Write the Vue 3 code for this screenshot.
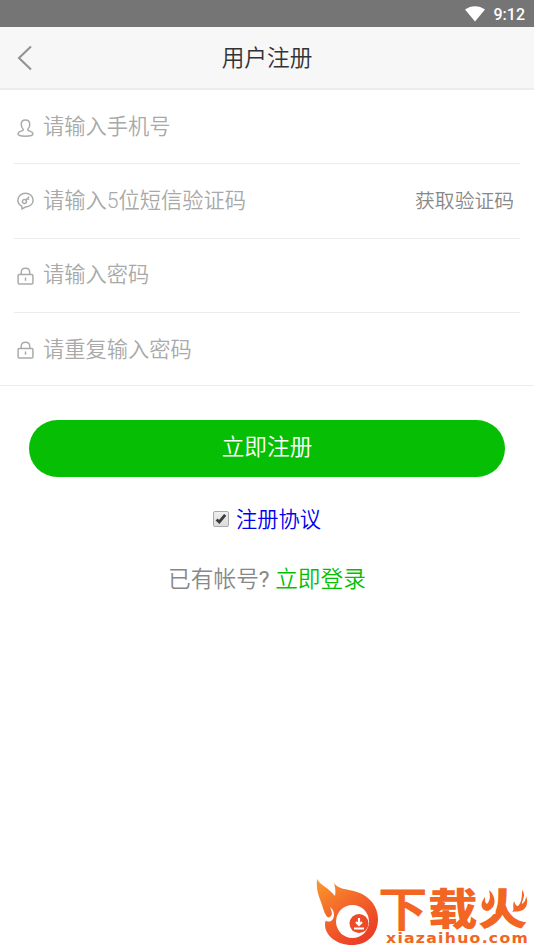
<script setup>
import { ref } from 'vue'

const agreed = ref(true)
const fields = [
  { id: 'phone', icon: 'user', type: 'tel', hint: '请输入手机号' },
  { id: 'code', icon: 'key', type: 'text', hint: '请输入5位短信验证码', action: '获取验证码' },
  { id: 'password', icon: 'lock', type: 'text', hint: '请输入密码' },
  { id: 'repeat', icon: 'lock', type: 'text', hint: '请重复输入密码' },
]
</script>

<template>
  <div class="page">
    <div class="status">
      <svg class="wifi" viewBox="0 0 20 16"><path d="M0 3.6C6-.9 14-.9 20 3.6L10 15.6Z" fill="#fff" /></svg>
      <span class="clock">9:12</span>
    </div>
    <header class="header">
      <svg class="back" viewBox="0 0 16 26"><path d="M14 1.500 2 13l12 11.500" fill="none" stroke="#939393" stroke-width="2.100" /></svg>
      <h1 class="title">用户注册</h1>
    </header>

    <form class="form" @submit.prevent>
      <div v-for="f in fields" :key="f.id" class="row" :class="f.id">
        <svg v-if="f.icon === 'user'" class="icon" viewBox="0 0 16 17">
          <path d="M5.8 9.7C4.4 8.5 4 6.8 4 5 4 2.4 5.5 1 8 1s4 1.4 4 4c0 1.800-.4 3.500-1.800 4.700-.4.8.3 1.200 1.300 1.500 2 .6 3.500 1.300 3.500 3 0 1.500-2 2-7 2s-7-.5-7-2c0-1.700 1.500-2.400 3.500-3 1-.3 1.700-.7 1.300-1.500Z" />
        </svg>
        <svg v-else-if="f.icon === 'key'" class="icon" viewBox="0 0 16 17">
          <path d="M4.400 13.300C2 12 .8 10 .8 7.700.8 4 4 1.200 8 1.200s7.200 2.800 7.200 6.500S12 14.200 8 14.200L4.700 16Z" />
          <circle cx="7" cy="9" r="1.900" />
          <path d="m8.400 7.600 3-3.100M9.900 6.100l1.300 1.200" />
        </svg>
        <svg v-else class="icon" viewBox="0 0 16 17">
          <rect x="1" y="7" width="14" height="9" rx="1" />
          <path d="M4 7V5c0-5.100 8-5.100 8 0v2M8 10v3" />
        </svg>
        <input class="field" :type="f.type" :placeholder="f.hint" />
        <button v-if="f.action" class="send" type="button">{{ f.action }}</button>
      </div>
    </form>

    <button class="submit" type="button">立即注册</button>

    <div class="agree">
      <button class="check" type="button" role="checkbox" :aria-checked="agreed" @click="agreed = !agreed">
        <svg v-if="agreed" viewBox="0 0 14 14"><path d="M2.600 7.500 5.300 10 11.200 2.900" fill="none" stroke="#3b3b3b" stroke-width="2.900" /></svg>
      </button>
      <a class="terms">注册协议</a>
    </div>
    <p class="login">已有帐号<span class="mark">?</span> <a class="go">立即登录</a></p>

    <div class="brand">
      <svg class="flame" viewBox="0 0 62 68">
        <defs>
          <linearGradient id="fire" x1="0" y1="0" x2=".65" y2="1">
            <stop offset="0" stop-color="#fa9a2b" />
            <stop offset=".5" stop-color="#f3672a" />
            <stop offset="1" stop-color="#eb3e27" />
          </linearGradient>
        </defs>
        <path fill="url(#fire)" d="M1 0C4 6 12 8 19 17C20 12 19 8 18 4C23 11 29 9 41 13C54 17 62 28 62 40C62 56 51 66 36 66C20 66 9 56 9 46C9 42 10 40 14 40C9 37 8 32 6 26C3 17 0 12 1 0Z" />
        <path fill="#fff" d="M4 32C7 39 12 40 15 37C17 34 15 31 14 28C18 31 19 36 17 40C14 45 7 43 4 32Z" />
        <circle cx="36.500" cy="42.500" r="16.500" fill="#fff" />
        <circle cx="43" cy="44.500" r="9.500" fill="#ed4a27" />
        <path d="M43 39v6M40 43l3 3 3-3M38 49.500h10" fill="none" stroke="#fff" stroke-width="2.200" />
      </svg>
      <div class="names">
        <div class="cn">
          <span class="thin">下</span><span>载</span><span>火</span>
          <svg class="sparks" viewBox="0 0 50 26">
            <path fill="#fff" d="M0 0H15.500V24H0ZM32 0H50V24H31L29 20Z" />
            <path fill="#f26522" d="M9 0C16 6 16 15 11 19C8 22 5 21 3 19C0 15 2 11 5 7C5 11 5 13 7 14C11 10 10 5 9 0ZM42 0C47 6 41 11 42 14C45 12 46 9 46 6C49 13 46 20 40 21C37 22 35 21 32 22C35 19 32 17 34 11C35 14 36 16 38 16C42 12 42 6 42 0Z" />
          </svg>
        </div>
        <div class="en">xiazaihuo.com</div>
      </div>
    </div>
  </div>
</template>

<style>
body { margin: 0; background: #fff; }
</style>

<style scoped>
.page {
  display: flex;
  flex-direction: column;
  box-sizing: border-box;
  width: 534px;
  height: 949px;
  overflow: hidden;
  background: #fff;
  font-family: Roboto, "Noto Sans CJK SC", sans-serif;
  font-weight: 350;
}
button { padding: 0; border: 0; background: none; font: inherit; }
.status {
  display: flex;
  align-items: center;
  justify-content: flex-end;
  gap: 8px;
  box-sizing: border-box;
  height: 27px;
  padding-right: 9px;
  background: #757575;
}
.wifi { width: 20px; height: 16px; margin-right: 1px; }
.clock { padding-top: 2px; color: #fff; font-size: 16px; font-weight: 500; line-height: 20px; }
.header {
  display: grid;
  grid-template-columns: 34px 1fr 34px;
  align-items: center;
  box-sizing: border-box;
  height: 63px;
  border-bottom: 2px solid #ececec;
  background: #f7f7f7;
}
.back { width: 16px; height: 26px; margin-left: 17px; }
.title { margin: 0; padding-top: 2px; color: #333; font-size: 22.700px; font-weight: 350; line-height: 30px; text-align: center; }
.form { border-bottom: 1px solid #ececec; }
.row {
  display: flex;
  align-items: center;
  box-sizing: border-box;
  height: 74px;
  margin: 0 14px;
  padding: 0 6px 0 3px;
  border-bottom: 1px solid #ececec;
}
.row.code { height: 75px; padding-bottom: 2px; }
.row.password { padding-bottom: 2px; }
.row.repeat { height: 72px; border: 0; }
.icon { flex: none; width: 17px; height: 18px; margin-top: 2px; fill: none; stroke: #aaa; stroke-width: 1.400; }
.field {
  flex: 1;
  min-width: 0;
  height: 40px;
  margin-left: 9px;
  padding: 0;
  border: 0;
  outline: 0;
  background: none;
  color: #333;
  font: inherit;
  font-size: 21.250px;
}
.field::placeholder { color: #a9a9a9; opacity: 1; }
.send { padding-bottom: 2px; color: #888; font-size: 19.800px; }
.submit {
  flex: none;
  height: 57px;
  margin: 34px 29px 0;
  padding-bottom: 7px;
  border-radius: 29px;
  background: #06bf04;
  color: #fff;
  font-size: 22.700px;
}
.agree { display: flex; align-items: center; justify-content: center; gap: 7px; height: 30px; margin-top: 27px; }
.check {
  box-sizing: border-box;
  width: 16px;
  height: 16px;
  border: 1px solid #aaa;
  border-radius: 2px;
  background: linear-gradient(#eee, #ddd);
}
.check svg { display: block; width: 14px; height: 14px; }
.terms { padding-top: 2px; color: #00e; font-size: 21.250px; line-height: 30px; }
.login { margin: 30px 0 0; color: #888; font-size: 22.700px; line-height: 32px; text-align: center; }
.mark { font-weight: 400; }
.go { color: #06bf04; }
.brand { display: flex; width: 218px; height: 70px; margin: auto 0 0 316px; }
.flame { flex: none; width: 62px; height: 68px; }
.names { display: flex; flex-direction: column; padding-top: 11px; color: #f26522; }
.cn { position: relative; display: flex; height: 42px; font-size: 43px; font-weight: 900; line-height: 40px; }
.cn span { width: 50px; transform: scaleX(1.150); transform-origin: 0 50%; }
.cn .thin { font-weight: 700; transform: scale(1.150, 1.080); }
.sparks { position: absolute; left: 102px; top: 0; width: 50px; height: 26px; }
.en {
  height: 14px;
  padding-left: 8px;
  font-family: "DejaVu Sans", sans-serif;
  font-size: 13.500px;
  font-weight: 700;
  line-height: 13px;
  letter-spacing: 1.100px;
  transform: scaleX(1.160);
  transform-origin: 8px 50%;
}
</style>
